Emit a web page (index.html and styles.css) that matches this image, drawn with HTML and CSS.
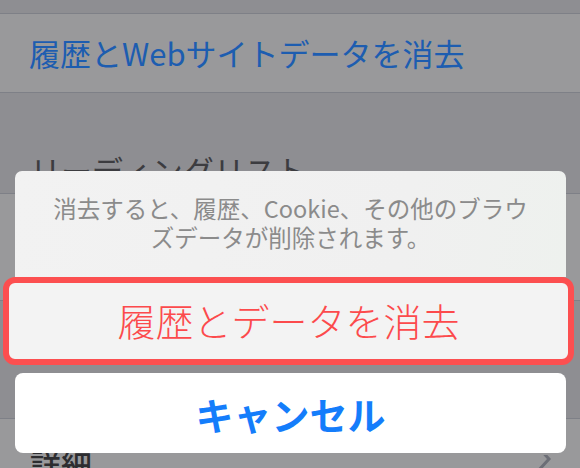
FILE: index.html
```html
<!DOCTYPE html>
<html lang="ja">

<head>
  <meta charset="UTF-8">
  <meta name="viewport" content="width=device-width, initial-scale=1.0">
  <title>Safari - 履歴とWebサイトデータを消去</title>
  <link rel="stylesheet" href="styles.css">
</head>

<body>
  <!-- 背景の設定リスト（暗くなっている） -->
  <div class="settings">
    <div class="top-gap"></div>

    <div class="row">
      <span class="row-link">履歴とWebサイトデータを消去</span>
    </div>

    <!-- セクション見出し -->
    <div class="section-head">
      <span class="section-title">リーディングリスト</span>
    </div>

    <div class="row row-tall">
      <span class="row-text">モバイルデータ通信を使用</span>
    </div>

    <div class="section-foot"></div>

    <div class="row row-detail">
      <span class="row-text">詳細</span>
      <svg class="chevron" width="20" height="30" viewBox="0 0 20 30">
        <path d="M4 -8 L15 4 L4 16" fill="none" stroke="#6c6e76" stroke-width="3" stroke-linecap="square"/>
      </svg>
    </div>
  </div>

  <!-- アクションシート -->
  <div class="action-sheet">
    <div class="sheet-message">
      消去すると、履歴、Cookie、その他のブラウ<br>ズデータが削除されます。
    </div>
    <div class="sheet-destructive">履歴とデータを消去</div>
    <div class="sheet-cancel">キャンセル</div>
  </div>
</body>

</html>
```

FILE: styles.css
```css
/* 全体リセット */
* {
  margin: 0;
  padding: 0;
  box-sizing: border-box;
}

body {
  width: 580px;
  height: 468px;
  overflow: hidden;
  position: relative;
  background: #8e8e92;
  font-family: "Noto Sans CJK JP", "Noto Sans", sans-serif;
}

/* 背景の設定リスト */
.settings {
  display: flex;
  flex-direction: column;
}

.top-gap {
  height: 14px;
  border-bottom: 1px solid #7e8087;
}

/* 行 */
.row {
  height: 79px;
  background: #99999b;
  border-bottom: 1px solid #7e8087;
  display: flex;
  align-items: center;
  padding-left: 29px;
}

.row-link {
  font-size: 31px;
  line-height: 1.2;
  color: #1d5db0;
}

.row-text {
  font-size: 31px;
  line-height: 1.2;
  color: #2d2d30;
}

/* セクション見出し */
.section-head {
  height: 101px;
  padding: 58px 0 0 30px;
  border-bottom: 1px solid #7e8087;
}

.section-title {
  font-size: 31px;
  line-height: 1.2;
  color: #3c3c40;
}

.row-tall {
  height: 107px;
}

.section-foot {
  height: 118px;
  border-bottom: 1px solid #7e8087;
}

/* 詳細の行 */
.row-detail {
  height: 60px;
  align-items: flex-start;
  justify-content: space-between;
  padding: 26px 26px 0 30px;
  border-bottom: none;
}

.row-detail .row-text {
  font-weight: 500;
}

.chevron {
  margin-top: 10px;
}

/* アクションシート（リストの上に重なる） */
.action-sheet {
  position: absolute;
  top: 171px;
  left: 0;
  right: 0;
  display: flex;
  flex-direction: column;
}

/* メッセージ部分 */
.sheet-message {
  margin: 0 14px 0 15px;
  height: 106px;
  padding-top: 23px;
  background: linear-gradient(100deg, #f2f2f2 0%, #f0f0f0 70%, #eef1ee 100%);
  border-radius: 7px 7px 0 0;
  font-size: 23.5px;
  line-height: 29px;
  color: #8b8b8b;
  text-align: center;
}

/* 消去ボタン（赤枠で囲まれている） */
.sheet-destructive {
  margin: 0 6px 0 3px;
  height: 88px;
  background: #f3f3f3;
  border: 6px solid #fc4f50;
  border-radius: 12px;
  display: flex;
  align-items: center;
  justify-content: center;
  padding-bottom: 4px;
  font-size: 38px;
  font-weight: 300;
  color: #fc4a4c;
}

/* キャンセルボタン */
.sheet-cancel {
  margin: 8px 14px 0 15px;
  height: 80px;
  background: #FFFFFF;
  border-radius: 8px;
  display: flex;
  align-items: center;
  justify-content: center;
  font-size: 38px;
  font-weight: 700;
  color: #147dfb;
}
```
